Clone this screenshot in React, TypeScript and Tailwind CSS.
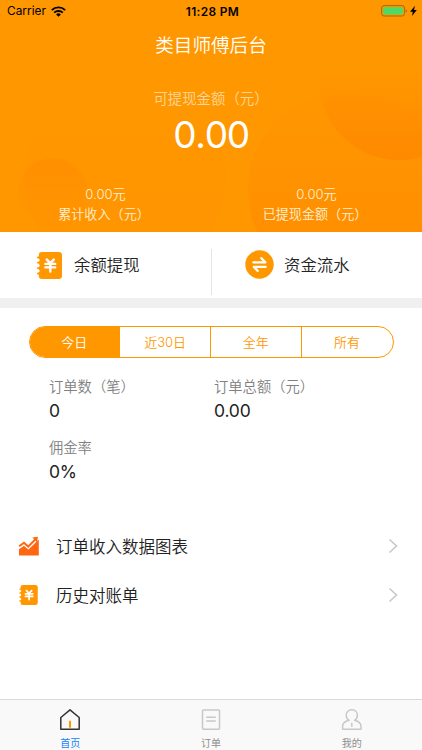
import type { ReactNode } from "react";

const BillIcon = ({ className }: { className: string }) => (
  <svg viewBox="0 0 25 27" className={className}>
    <rect x="1.8" y="0" width="23.2" height="27" rx="3.2" fill="#ff9800" />
    <g fill="#fff">
      <circle cx="1.4" cy="8" r="1.3" />
      <circle cx="1.4" cy="13.5" r="1.3" />
      <circle cx="1.4" cy="19" r="1.3" />
    </g>
    <g fill="#ff9800">
      <rect x="0" y="4.6" width="3" height="1.8" rx=".9" />
      <rect x="0" y="9.8" width="3" height="1.8" rx=".9" />
      <rect x="0" y="15.3" width="3" height="1.8" rx=".9" />
      <rect x="0" y="20.6" width="3" height="1.8" rx=".9" />
    </g>
    <path
      d="M9.8 7.6L13.3 11.2L16.8 7.6M8.4 11.9H18.2M8.4 15.4H18.2M13.3 11.5V19.6"
      fill="none"
      stroke="#fff"
      strokeWidth="2.4"
      strokeLinecap="round"
    />
  </svg>
);

const Arrow = () => (
  <svg viewBox="0 0 10 16" className="w-2.5 h-4 mr-6 mb-px">
    <path d="M1.5 1.5L8.5 8L1.5 14.5" fill="none" stroke="#c7c7cc" strokeWidth="1.6" />
  </svg>
);

const Stat = ({ label, value }: { label: string; value: string }) => (
  <div className="h-[61px]">
    <p className="text-[14.3px] leading-[22px] text-[#808080] whitespace-nowrap">{label}</p>
    <p className="text-[17.5px] leading-[26px] font-normal tracking-[-0.2px] text-[#222]">{value}</p>
  </div>
);

const Row = ({ icon, label }: { icon: ReactNode; label: string }) => (
  <div className="flex items-center h-[49px]">
    <div className="w-[37px] flex pb-0.5">{icon}</div>
    <p className="flex-1 pt-px pl-px text-[16.5px] text-[#222]">{label}</p>
    <Arrow />
  </div>
);

const App = () => {
  return (
    <div className="w-[422px] h-[750px] flex flex-col bg-white overflow-hidden font-[350] font-['Inter','Noto_Sans_CJK_SC',sans-serif]">
      <div className="relative h-[232px] bg-[#ff9800] text-white shrink-0">
        <svg viewBox="0 0 422 232" className="absolute inset-0 w-full h-full">
          <defs>
            <linearGradient id="large" x1="0" y1="0" x2="0" y2="1">
              <stop offset="0" stopColor="#ff8d00" stopOpacity="0.1" />
              <stop offset="0.7" stopColor="#ff8d00" stopOpacity="0.8" />
            </linearGradient>
            <linearGradient id="small" x1="0" y1="0" x2="0" y2="1">
              <stop offset="0" stopColor="#ff8d00" stopOpacity="0.7" />
              <stop offset="0.9" stopColor="#ff8d00" stopOpacity="0.1" />
            </linearGradient>
            <linearGradient id="dark" x1="0" y1="0" x2="0" y2="1">
              <stop offset="0.4" stopColor="#ff8a00" stopOpacity="0" />
              <stop offset="1" stopColor="#ff8a00" />
            </linearGradient>
          </defs>
          <circle cx="125" cy="178" r="101" fill="url(#large)" opacity=".35" />
          <circle cx="53" cy="193" r="35" fill="url(#small)" />
          <circle cx="347" cy="190" r="99" fill="url(#large)" />
          <circle cx="399" cy="80" r="80" fill="url(#dark)" />
        </svg>
        <div className="relative flex flex-col">
          <div className="flex items-center h-[22px] pl-[7px] pr-1 text-black text-xs">
            <div className="flex-1 flex items-center font-normal">
              <span className="text-[11.9px]">Carrier</span>
              <svg viewBox="0 0 15 11" className="w-[15px] h-[11px] ml-[5px]">
                <g fill="none" stroke="#000" strokeWidth="1.9">
                  <path d="M.8 4.1a9.5 9.5 0 0 1 13.4 0" />
                  <path d="M3.2 6.7a6.1 6.1 0 0 1 8.6 0" />
                </g>
                <path d="M7.5 10.8L5.1 8.4a3.4 3.4 0 0 1 4.8 0z" />
              </svg>
            </div>
            <span className="pt-px font-semibold text-[11.9px] tracking-[0.35px]">11:28 PM</span>
            <div className="flex-1 flex items-center justify-end">
              <svg viewBox="0 0 37 12" className="w-[37px] h-3">
                <rect x=".6" y=".6" width="23" height="10.4" rx="2.4" fill="none" stroke="#a96708" />
                <rect x="2.2" y="2.2" width="19.8" height="7.2" rx="1" fill="#4cd964" />
                <path d="M24.8 4.2a1.8 1.8 0 0 1 0 3.4z" fill="#a96708" />
                <path d="M34 .8L29 6.7h2.8L31 11l4.8-5.9H33z" fill="#000" />
              </svg>
            </div>
          </div>
          <h1 className="h-[46px] text-center text-[18.6px] leading-[46px]">类目师傅后台</h1>
          <p className="mt-[20px] text-center text-[14.4px] leading-[22px] text-[#ffd699]">
            可提现金额（元）
          </p>
          <p className="text-center text-[37px] leading-[50px] font-normal tracking-[-1.3px] [font-kerning:none]">
            0.00
          </p>
          <div className="grid grid-cols-2 mt-[24px] text-center text-[13.1px] leading-[20px] text-[#fff0d5]">
            <div>
              <p>0.00元</p>
              <p className="pr-[3px]">累计收入（元）</p>
            </div>
            <div>
              <p>0.00元</p>
              <p className="pr-[3px]">已提现金额（元）</p>
            </div>
          </div>
        </div>
      </div>

      <div className="flex items-center h-[66px] shrink-0 text-[16.4px] text-[#222]">
        <div className="w-[211px] flex items-center pl-[37px]">
          <BillIcon className="w-[25px] h-[27px]" />
          <span className="ml-3">余额提现</span>
        </div>
        <div className="w-px h-[46px] mt-[13px] bg-[#e5e5e5]" />
        <div className="flex items-center pl-[33px]">
          <svg viewBox="0 0 29 29" className="w-[29px] h-[29px] mb-px">
            <circle cx="14.5" cy="14.5" r="14.2" fill="#ff9800" />
            <path
              d="M8.4 12.4H20.3L16.4 8.2M20.6 16.9H8.9L12.6 20.8"
              fill="none"
              stroke="#fff"
              strokeWidth="2.3"
              strokeLinecap="round"
              strokeLinejoin="round"
            />
          </svg>
          <span className="ml-2.5">资金流水</span>
        </div>
      </div>
      <div className="h-2.5 shrink-0 bg-[#f0f0f0]" />

      <div className="grid grid-cols-4 w-[365px] h-8 mt-[18px] ml-[28.5px] shrink-0 rounded-full border border-[#ff9800] overflow-hidden divide-x divide-[#ff9800] text-center text-[13px] leading-[30px] text-[#ff9800]">
        <div className="bg-[#ff9800] text-white">今日</div>
        <div>近30日</div>
        <div>全年</div>
        <div>所有</div>
      </div>

      <div className="grid grid-cols-[165px_1fr] mt-[18px] pl-[49px]">
        <Stat label="订单数（笔）" value="0" />
        <Stat label="订单总额（元）" value="0.00" />
        <Stat label="佣金率" value="0%" />
      </div>

      <div className="mt-[24px] pl-[18px]">
        <Row
          icon={
            <svg viewBox="0 0 22 20" className="w-[22px] h-5">
              <path d="M1 19.5V13.2L6 9.8L10.4 13.6L20.8 3.4V19.5z" fill="#ff6611" />
              <path d="M1.2 10.2L6 6.8L10.2 10.6L17.5 3.2" fill="none" stroke="#fff" strokeWidth="4" />
              <path d="M1.2 10.2L6 6.8L10.2 10.6L17.5 3.2" fill="none" stroke="#ff6611" strokeWidth="2" />
              <path d="M14.3 1.6L20 .8L19 6.3z" fill="#ff6611" />
            </svg>
          }
          label="订单收入数据图表"
        />
        <Row icon={<BillIcon className="w-[19px] h-5 ml-px" />} label="历史对账单" />
      </div>

      <div className="grid grid-cols-3 h-[51px] mt-auto shrink-0 border-t border-[#d9d9d9] bg-[#f9f9f9] text-[10px] leading-[14px] font-normal text-[#8e8e8e]">
        <div className="flex flex-col items-center pt-2 text-[#1683fb]">
          <svg viewBox="0 0 22 24" className="w-[22px] h-6 mb-1" fill="none" strokeWidth="1.5">
            <path d="M1.8 9.5L11 1.8L20.2 9.5V21.2H1.8z" stroke="#333" strokeLinejoin="round" />
            <path d="M11 13.5V19" stroke="#ff9800" strokeWidth="2" strokeLinecap="round" />
          </svg>
          首页
        </div>
        <div className="flex flex-col items-center pt-2">
          <svg viewBox="0 0 22 24" className="w-[22px] h-6 mb-1" fill="none" stroke="#c8c8c8" strokeWidth="1.5">
            <rect x="2.5" y="2" width="17" height="19.2" rx="1" />
            <path d="M6.2 9.2H15.8M6.2 13H15.8" />
          </svg>
          订单
        </div>
        <div className="flex flex-col items-center pt-2">
          <svg viewBox="0 0 22 24" className="w-[22px] h-6 mb-1" fill="none" stroke="#c8c8c8" strokeWidth="1.5">
            <path
              d="M8.1 12.3C6 11.2 5.2 9 5.2 7.2C5.2 4 7.7 1.8 10.8 1.8S16.4 4 16.4 7.2C16.4 9 15.6 11.2 13.5 12.3C17.2 13.2 20 15.8 20 18.5V21.2H1.6V18.5C1.6 15.8 4.4 13.2 8.1 12.3z"
              strokeLinejoin="round"
            />
            <path d="M10.8 14.8V18.8" />
          </svg>
          我的
        </div>
      </div>
    </div>
  );
};

export default App;
